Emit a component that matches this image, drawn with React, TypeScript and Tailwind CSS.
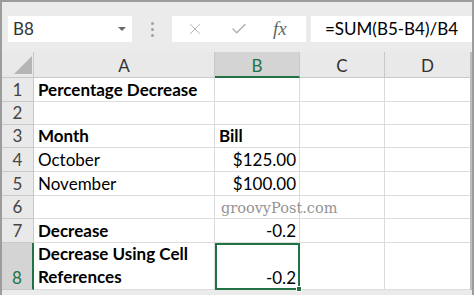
import { X, Check } from 'lucide-react';

const rows: { n: string; a: string[]; b: string; bold?: boolean; h: string }[] = [
  { n: '1', a: ['Percentage Decrease'], b: '', bold: true, h: 'h-[24px]' },
  { n: '2', a: [''], b: '', h: 'h-[23px]' },
  { n: '3', a: ['Month'], b: 'Bill', bold: true, h: 'h-[23px]' },
  { n: '4', a: ['October'], b: '$125.00', h: 'h-[24px]' },
  { n: '5', a: ['November'], b: '$100.00', h: 'h-[24px]' },
  { n: '6', a: [''], b: '', h: 'h-[23px]' },
  { n: '7', a: ['Decrease'], b: '-0.2', bold: true, h: 'h-[24px]' },
];

const font = { fontFamily: 'Lato, "Open Sans", sans-serif' };

function Row({ n, a, b, bold, h }: (typeof rows)[number]) {
  const leftB = n === '3';
  return (
    <>
      <div className={`${h} flex items-end justify-center border-r border-b border-[#c8c8c8] bg-[#e9e9e9] pb-[1px] text-[17px] leading-[20px] text-[#444]`}>
        {n}
      </div>
      <div className={`${h} flex items-end border-r border-b border-[#dcdcdc] bg-white pl-[4px] pb-[1px] text-[17px] leading-[20px] text-black ${bold ? 'font-bold' : ''}`}>
        {a[0]}
      </div>
      <div className={`${h} relative flex items-end border-r border-b border-[#dcdcdc] bg-white pb-[1px] text-[17px] leading-[20px] text-black ${leftB ? 'justify-start pl-[4px] font-bold' : 'justify-end pr-[3px]'}`}>
        {n === '6' ? (
          <span
            className="absolute left-[6px] top-[2px] whitespace-nowrap text-[14.5px] text-[#939393]"
            style={{ fontFamily: '"DejaVu Serif", serif' }}
          >
            groovyPost.com
          </span>
        ) : (
          b
        )}
      </div>
      <div className={`${h} border-r border-b border-[#dcdcdc] bg-white`} />
      <div className={`${h} border-b border-[#dcdcdc] bg-white`} />
    </>
  );
}

export default function App() {
  return (
    <div className="h-[295px] w-[474px] overflow-hidden border-t-2 border-l-2 border-r-2 border-[#9c9c9c] bg-[#ebebeb]" style={font}>
      {/* formula bar */}
      <div className="flex h-[50px] items-start pt-[14px] pl-[6px]">
        <div className="flex h-[26px] w-[124px] items-center justify-between bg-white pl-[5px] pr-[6px] text-[17px] text-[#333]">
          <span>B8</span>
          <span className="h-0 w-0 border-x-[4px] border-t-[4px] border-x-transparent border-t-[#6a6a6a]" />
        </div>
        <div className="flex h-[26px] w-[40px] flex-col items-center justify-center gap-[3px]">
          <span className="h-[3px] w-[3px] rounded-full bg-[#a0a0a0]" />
          <span className="h-[3px] w-[3px] rounded-full bg-[#a0a0a0]" />
          <span className="h-[3px] w-[3px] rounded-full bg-[#a0a0a0]" />
        </div>
        <div className="flex h-[26px] w-[134px] items-center bg-white pl-[14px] text-[#b0b0b0]">
          <X className="h-[18px] w-[18px]" strokeWidth={1.25} />
          <Check className="ml-[26px] h-[18px] w-[18px]" strokeWidth={2} />
          <span
            className="ml-[25px] text-[19px] italic text-[#666]"
            style={{ fontFamily: '"Liberation Serif", serif' }}
          >
            fx
          </span>
        </div>
        <div className="ml-[5px] flex h-[26px] flex-1 items-center bg-white pl-[14px] text-[17px] text-black">
          =SUM(B5-B4)/B4
        </div>
      </div>

      {/* sheet */}
      <div className="grid w-[470px] grid-cols-[32px_181px_85px_85px_85px] border-r-2 border-[#bdbdbd]">
        {/* column headers */}
        <div className="relative h-[26px] border-r border-b border-[#c8c8c8] bg-[#e9e9e9]">
          <span className="absolute right-[1px] bottom-[3px] h-0 w-0" style={{ borderBottom: '18px solid #b5b5b5', borderLeft: '18px solid transparent' }} />
        </div>
        <div className="flex h-[26px] items-end justify-center border-r border-b border-[#c8c8c8] bg-[#e9e9e9] pb-[1px] text-[17px] leading-[20px] text-[#333]">A</div>
        <div className="flex h-[26px] items-end justify-center border-r border-b-2 border-r-[#c8c8c8] border-b-[#217346] bg-[#d4d4d4] text-[17px] leading-[20px] text-[#217346]">B</div>
        <div className="flex h-[26px] items-end justify-center border-r border-b border-[#c8c8c8] bg-[#e9e9e9] pb-[1px] text-[17px] leading-[20px] text-[#333]">C</div>
        <div className="flex h-[26px] items-end justify-center border-b border-[#c8c8c8] bg-[#e9e9e9] pb-[1px] text-[17px] leading-[20px] text-[#333]">D</div>

        {rows.map((r) => (
          <Row key={r.n} {...r} />
        ))}

        {/* row 8 */}
        <div className="flex h-[47px] items-end justify-center border-r-2 border-b border-r-[#217346] border-b-[#c8c8c8] bg-[#d4d4d4] pb-[1px] text-[17px] leading-[20px] text-[#217346]">8</div>
        <div className="flex h-[47px] flex-col justify-end border-r border-b border-[#dcdcdc] bg-white pl-[4px] pb-[1px] text-[17px] font-bold leading-[23px] text-black">
          <span>Decrease Using Cell</span>
          <span>References</span>
        </div>
        <div className="relative flex h-[47px] items-end justify-end border-2 border-[#217346] bg-white pr-[2px] text-[17px] leading-[20px] text-black">
          -0.2
          <span className="absolute -right-[4px] -bottom-[4px] h-[6px] w-[6px] border border-white bg-[#217346]" />
        </div>
        <div className="h-[47px] border-r border-b border-[#dcdcdc] bg-white" />
        <div className="h-[47px] border-b border-[#dcdcdc] bg-white" />
      </div>
    </div>
  );
}
